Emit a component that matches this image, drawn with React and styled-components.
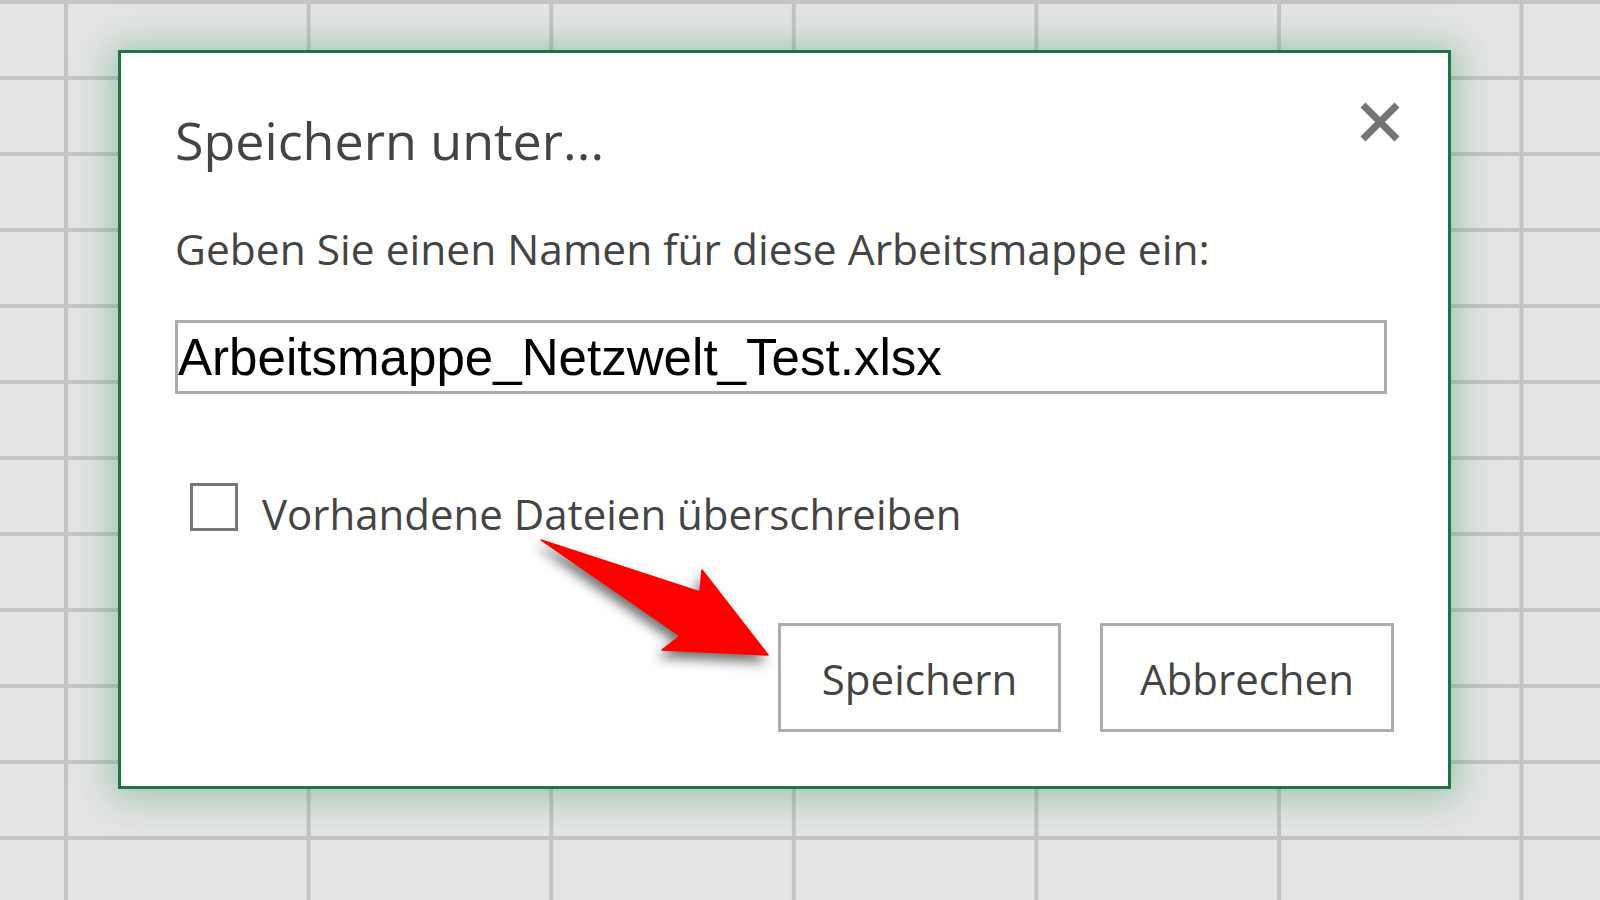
import React from 'react';
import styled, { createGlobalStyle } from 'styled-components';

const GlobalStyle = createGlobalStyle`
    html, body {
        margin: 0;
        padding: 0;
        overflow: hidden;
    }
    * {
        box-sizing: border-box;
    }
`;

// Tabellenhintergrund mit Gitterlinien
const Sheet = styled.div`
    width: 1600px;
    height: 900px;
    padding: 50px 0 0 118px;
    background-color: #e4e4e4;
    background-image:
        linear-gradient(to right, #c4c4c4 4px, transparent 4px),
        linear-gradient(to bottom, #c4c4c4 4px, transparent 4px);
    background-size: 242.6px 100%, 100% 76px;
    background-position: 64px 0, 0 0;
`;

const Dialog = styled.div`
    position: relative;
    width: 1333px;
    padding: 57px 54px 54px;
    background: #fff;
    border: 3px solid #217346;
    box-shadow: 0 2px 34px 6px rgba(40, 145, 85, 0.38);
    display: flex;
    flex-direction: column;
    font-family: "Open Sans", "Noto Sans", sans-serif;
    color: #444;
`;

const Header = styled.div`
    display: flex;
    justify-content: space-between;
    align-items: flex-start;
`;

const Title = styled.h1`
    margin: 0;
    font-size: 52px;
    line-height: 60px;
    font-weight: 400;
    color: #444;
`;

const CloseButton = styled.button`
    width: 40px;
    height: 40px;
    margin: -8px -6px 0 0;
    padding: 0;
    border: none;
    background: transparent;
    cursor: pointer;
    display: flex;

    svg {
        width: 40px;
        height: 40px;
    }
`;

const Label = styled.div`
    margin-top: 54px;
    font-size: 42.5px;
    line-height: 50px;
`;

const NameInput = styled.input`
    margin-top: 46px;
    width: 1212px;
    height: 74px;
    padding: 0;
    border: 3px solid #acacac;
    outline: none;
    background: #fff;
    font-family: "Liberation Sans", Arial, sans-serif;
    font-size: 51.1px;
    line-height: 68px;
    color: #000;
`;

const CheckRow = styled.label`
    margin-top: 89px;
    padding-left: 15px;
    display: flex;
    align-items: flex-start;
    gap: 24px;
    height: 48px;
    cursor: pointer;
`;

const CheckBox = styled.span`
    width: 48px;
    height: 48px;
    flex-shrink: 0;
    border: 3px solid #777;
    background: #fff;
`;

const CheckText = styled.span`
    margin-top: 6px;
    font-size: 42px;
    line-height: 50px;
`;

const ButtonRow = styled.div`
    margin-top: 92px;
    display: flex;
    justify-content: flex-end;
    gap: 39px;
`;

const Button = styled.button`
    width: ${props => props.$width}px;
    height: 109px;
    padding: 2px 0 0;
    border: 3px solid #adadad;
    background: #fff;
    font-family: "Open Sans", "Noto Sans", sans-serif;
    font-size: 42px;
    line-height: 101px;
    color: #444;
    cursor: pointer;
`;

// Roter Hinweispfeil liegt über dem Dialog
const Arrow = styled.svg`
    position: absolute;
    left: 399px;
    top: 467px;
    width: 280px;
    height: 180px;
    overflow: visible;
    filter: drop-shadow(-3px 7px 6px rgba(0, 0, 0, 0.55));
    pointer-events: none;
`;

export default function App() {
    return (
        <>
            <GlobalStyle />
            <Sheet>
                <Dialog>
                    <Header>
                        <Title>Speichern unter...</Title>
                        <CloseButton aria-label="Schließen">
                            <svg viewBox="0 0 40 40">
                                <path d="M3 3 L37 37 M37 3 L3 37" stroke="#747474" strokeWidth="7" fill="none" />
                            </svg>
                        </CloseButton>
                    </Header>

                    <Label>Geben Sie einen Namen für diese Arbeitsmappe ein:</Label>
                    <NameInput readOnly value="Arbeitsmappe_Netzwelt_Test.xlsx" />

                    <CheckRow>
                        <CheckBox />
                        <CheckText>Vorhandene Dateien überschreiben</CheckText>
                    </CheckRow>

                    <ButtonRow>
                        <Button $width={283}>Speichern</Button>
                        <Button $width={294}>Abbrechen</Button>
                    </ButtonRow>

                    <Arrow viewBox="0 0 280 180">
                        <polygon
                            points="21,20 180,72 182,50 248,135 142,130 160,116"
                            fill="#ff0000"
                            stroke="#ff0000"
                            strokeWidth="1.5"
                            strokeLinejoin="round"
                        />
                    </Arrow>
                </Dialog>
            </Sheet>
        </>
    );
}
